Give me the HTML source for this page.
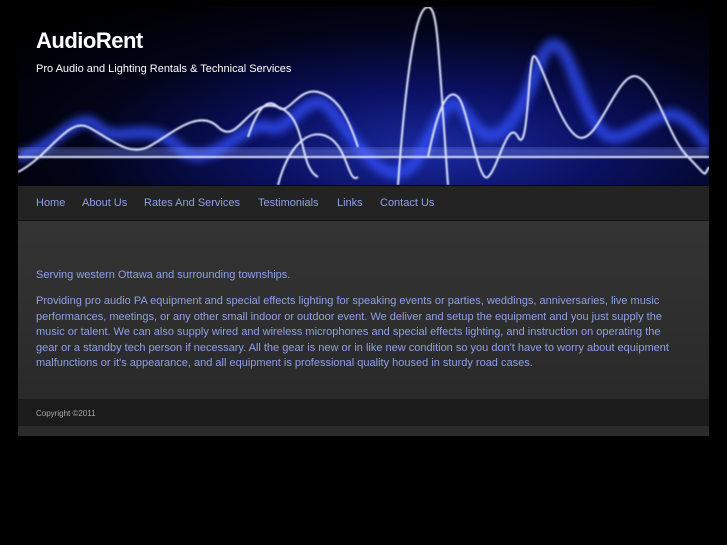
<!DOCTYPE html>
<html><head><meta charset="utf-8"><style>
body{margin:0;background:#000;width:727px;height:545px;overflow:hidden;font-family:"Liberation Sans",sans-serif}
#wrap{position:absolute;left:18px;top:0;width:691px}
#hdr{position:absolute;left:0;top:7px;width:691px;height:178px;background:radial-gradient(ellipse at 60% 80%,#1a2aa0 0%,#0a1060 30%,#020418 60%,#000 90%);overflow:hidden}
#hdr h1{position:absolute;left:18px;top:21px;margin:0;font-size:22px;color:#fff;font-weight:bold;letter-spacing:-0.5px}
#hdr p{position:absolute;left:18px;top:56px;margin:0;font-size:11px;color:#fff}
#nav{position:absolute;top:186px;left:0;width:691px;height:34px;background:#232323;border-bottom:1px solid #111}
#nav a{position:absolute;top:11px;font-size:11px;color:#8ea0e6;text-decoration:none}
#main{position:absolute;top:221px;left:0;width:691px;height:169px;background:linear-gradient(#343434,#2a2a2a)}
#main p{margin:0;position:absolute;left:18px;width:646px;font-size:11px;line-height:15.5px;color:#8ea0e6}
#strip{position:absolute;top:390px;left:0;width:691px;height:9px;background:#2a2a2a}
#foot{position:absolute;top:399px;left:0;width:691px;height:27px;background:#1b1b1b}
#foot span{position:absolute;left:18px;top:10px;font-size:8px;color:#aaa}
#bot{position:absolute;top:426px;left:0;width:691px;height:10px;background:#2b2b2b}
</style></head><body>
<div id="wrap">
<div id="hdr">
<svg width="691" height="178" style="position:absolute;left:0;top:0">
<defs><filter id="b"><feGaussianBlur stdDeviation="4"/></filter><filter id="s"><feGaussianBlur stdDeviation="0.8"/></filter></defs>
<g filter="url(#b)" stroke="#3050ff" stroke-width="12" fill="none" opacity="0.75">
<path d="M0 150 C40 140 60 100 80 120 S130 110 160 140 S230 110 250 120 S290 80 310 100 S370 200 400 150 S430 80 450 110 S490 140 520 60 S560 140 600 130 S650 80 691 140"/>
</g>
<rect x="0" y="141" width="691" height="8" fill="#8090ff" opacity="0.5" filter="url(#b)"/>
<g filter="url(#s)" stroke="#e0e6ff" stroke-width="2" fill="none">
<path d="M0 150 H691"/>
<path d="M0 165 C30 150 50 110 70 120 S110 150 130 140 S180 100 200 120 S230 90 260 100 S280 160 300 170"/>
<path d="M230 130 C240 100 250 90 260 100 S280 80 300 85 S330 110 340 140"/>
<path d="M380 178 C390 40 400 0 410 0 S420 40 430 178"/>
<path d="M410 150 C420 100 430 80 440 90 S460 178 470 170 S490 110 500 130 S510 60 515 50 S540 120 560 130 S600 60 620 70 S650 130 670 150 S685 170 691 160"/>
<path d="M260 178 C270 140 290 120 310 130 S330 178 340 170"/>
</g>
</svg>
<h1>AudioRent</h1>
<p>Pro Audio and Lighting Rentals &amp; Technical Services</p>
</div>
<div id="nav">
<a style="left:18px">Home</a><a style="left:64px">About Us</a><a style="left:126px">Rates And Services</a><a style="left:240px">Testimonials</a><a style="left:319px">Links</a><a style="left:362px">Contact Us</a>
</div>
<div id="main">
<p style="top:47px">Serving western Ottawa and surrounding townships.</p>
<p style="top:73px">Providing pro audio PA equipment and special effects lighting for speaking events or parties, weddings, anniversaries, live music performances, meetings, or any other small indoor or outdoor event. We deliver and setup the equipment and you just supply the music or talent. We can also supply wired and wireless microphones and special effects lighting, and instruction on operating the gear or a standby tech person if necessary. All the gear is new or in like new condition so you don't have to worry about equipment malfunctions or it's appearance, and all equipment is professional quality housed in sturdy road cases.</p>
</div>
<div id="strip"></div>
<div id="foot"><span>Copyright ©2011</span></div>
<div id="bot"></div>
</div>
</body></html>
